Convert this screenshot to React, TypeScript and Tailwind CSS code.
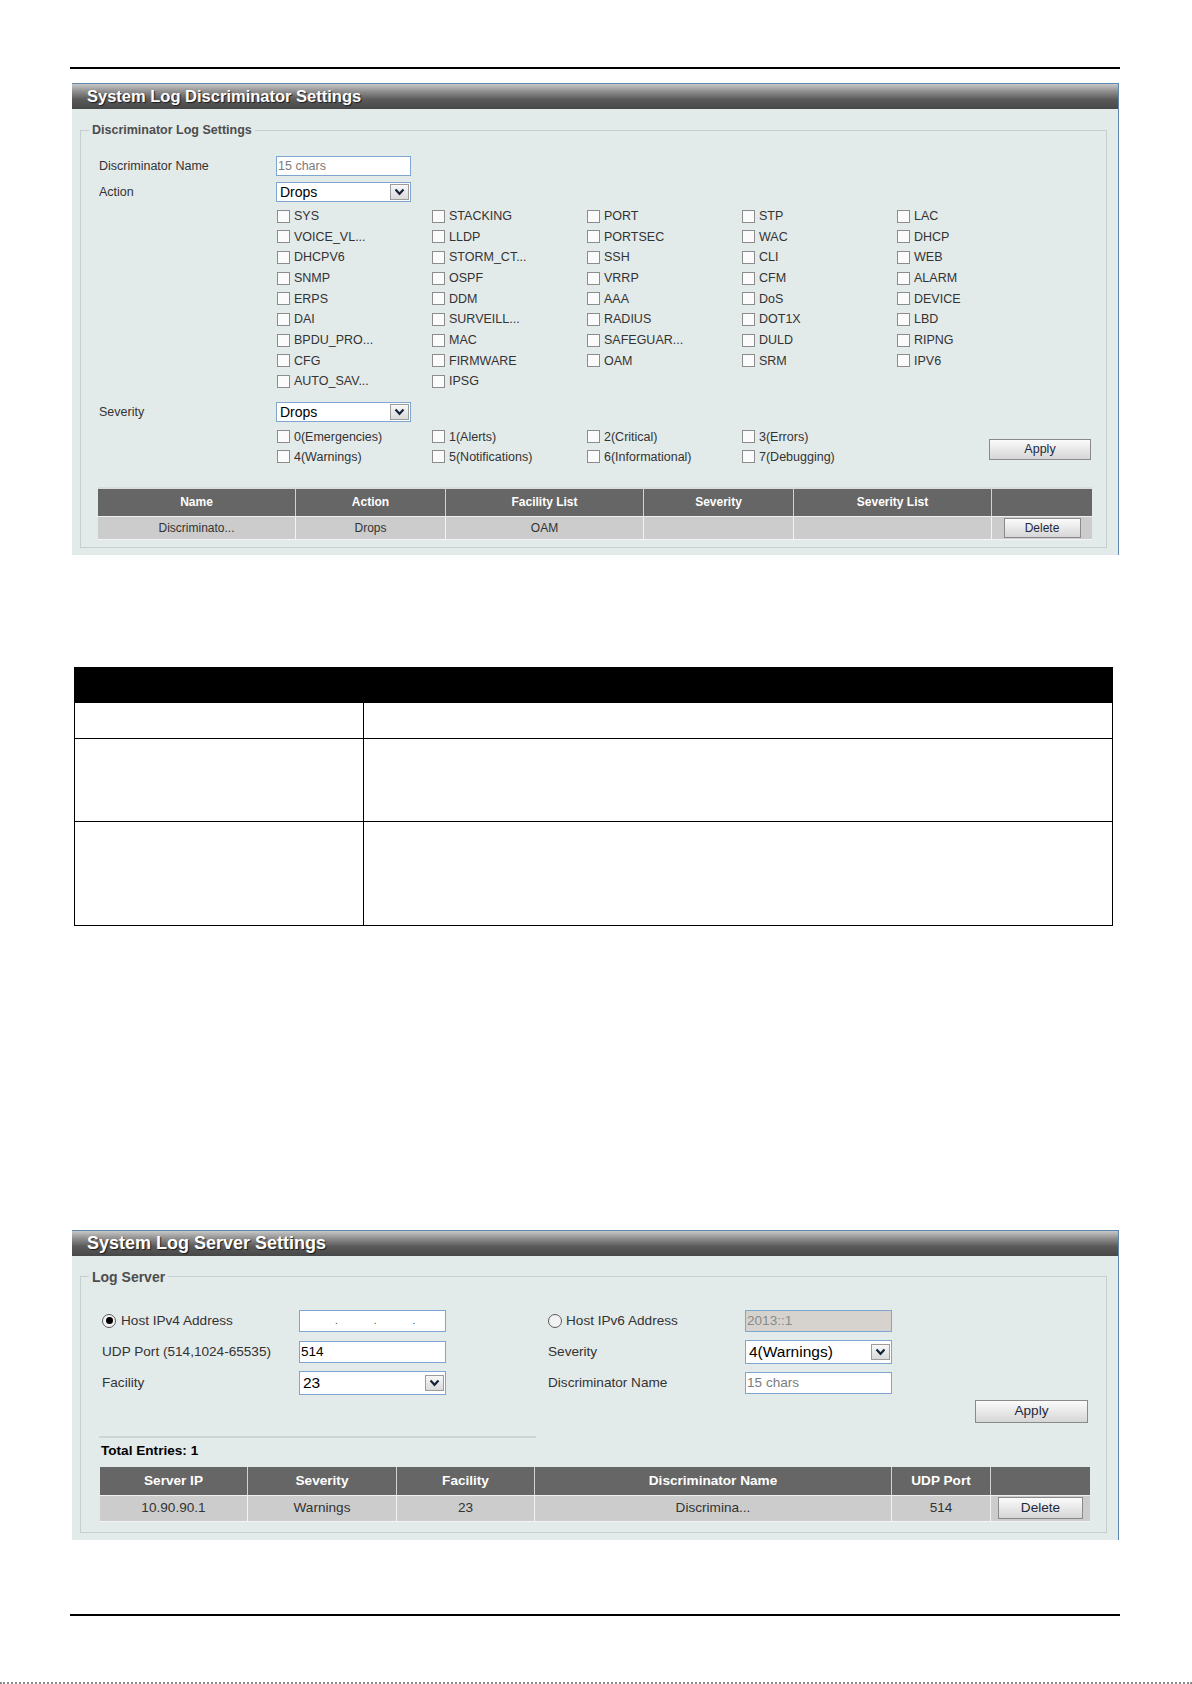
import type { ReactNode } from 'react';

const FACILITIES = [
  'SYS', 'STACKING', 'PORT', 'STP', 'LAC',
  'VOICE_VL...', 'LLDP', 'PORTSEC', 'WAC', 'DHCP',
  'DHCPV6', 'STORM_CT...', 'SSH', 'CLI', 'WEB',
  'SNMP', 'OSPF', 'VRRP', 'CFM', 'ALARM',
  'ERPS', 'DDM', 'AAA', 'DoS', 'DEVICE',
  'DAI', 'SURVEILL...', 'RADIUS', 'DOT1X', 'LBD',
  'BPDU_PRO...', 'MAC', 'SAFEGUAR...', 'DULD', 'RIPNG',
  'CFG', 'FIRMWARE', 'OAM', 'SRM', 'IPV6',
  'AUTO_SAV...', 'IPSG',
];

const SEVERITIES = [
  '0(Emergencies)', '1(Alerts)', '2(Critical)', '3(Errors)',
  '4(Warnings)', '5(Notifications)', '6(Informational)', '7(Debugging)',
];

const DISC_COLS = 'grid grid-cols-[198px_150px_198px_150px_198px_100px]';
const SERVER_COLS = 'grid grid-cols-[148px_149px_138px_357px_99px_99px]';

function Check({ label }: { label: string }) {
  return (
    <label className="flex items-center gap-[4px] text-[12.5px] text-[#333] whitespace-nowrap">
      <span className="ml-[1px] w-[13px] h-[13px] border border-[#8c8c8c] bg-[#fbfbfb] shrink-0" />
      {label}
    </label>
  );
}

function Radio({ on }: { on?: boolean }) {
  return (
    <span className="w-[14px] h-[14px] rounded-full border border-[#5a5a5a] bg-[#f2f2f2] flex items-center justify-center shrink-0">
      {on && <span className="w-[7px] h-[7px] rounded-full bg-black" />}
    </span>
  );
}

function Chevron() {
  return (
    <svg width="11" height="8" viewBox="0 0 11 8">
      <path d="M1.5 1.5 5.5 5.8 9.5 1.5" fill="none" stroke="#17263c" strokeWidth="2.2" />
    </svg>
  );
}

function Select({ value, className }: { value: string; className: string }) {
  return (
    <div className={`${className} border border-[#7fa6d2] bg-white flex items-center justify-between pl-[3px] pr-[1px]`}>
      <span className="text-black leading-none">{value}</span>
      <span className="w-[19px] h-[16px] border border-[#9c9c9c] bg-linear-to-b from-[#f8f8f8] to-[#dadada] flex items-center justify-center">
        <Chevron />
      </span>
    </div>
  );
}

function TextBox({ className, placeholder, value }: { className: string; placeholder?: string; value?: string }) {
  return (
    <input
      readOnly
      placeholder={placeholder}
      value={value ?? ''}
      className={`${className} border border-[#7fa6d2] bg-white px-[1px] text-black placeholder:text-[#7c7c7c] outline-none`}
    />
  );
}

function Button({ label, className }: { label: string; className: string }) {
  return (
    <button className={`${className} border border-[#8a8a8a] bg-linear-to-b from-[#fbfbfb] to-[#d6d6d6] text-[#1e2a40] flex items-center justify-center`}>
      {label}
    </button>
  );
}

function Panel({ title, legend, children, className, titleSize, legendSize }: {
  title: string;
  legend: string;
  children: ReactNode;
  className: string;
  titleSize: string;
  legendSize: string;
}) {
  return (
    <section className={`${className} ml-[72px] w-[1047px] bg-[#e3eaea] border-t border-r border-[#5d87ad] shrink-0`}>
      <div className="h-[25px] bg-[linear-gradient(#c8c8c8,#8e8e8e_30%,#5a5a5a_62%,#474747)] pl-[15px] flex items-center">
        <h2 className={`${titleSize} text-white font-bold leading-none [text-shadow:1px_1px_1px_#1c1c1c]`}>{title}</h2>
      </div>
      <div className="pl-[8px] pr-[11px] pt-[14px] pb-[7px]">
        <fieldset className="border border-[#c4cfcf]">
          <legend className={`${legendSize} ml-[8px] px-[3px] leading-[14px] font-bold text-[#4d4d4d]`}>{legend}</legend>
          {children}
        </fieldset>
      </div>
    </section>
  );
}

function DiscriminatorPanel() {
  return (
    <Panel
      className="mt-[14px]"
      titleSize="text-[16.5px]"
      legendSize="text-[12.5px]"
      title="System Log Discriminator Settings"
      legend="Discriminator Log Settings"
    >
      <div className="pl-[18px] pr-[13px] pt-[19px] pb-[7px] text-[12.5px] text-[#333]">
        <div className="flex items-center h-[20px]">
          <span className="w-[177px]">Discriminator Name</span>
          <TextBox className="w-[135px] h-[20px] text-[12.5px]" placeholder="15 chars" />
        </div>
        <div className="flex items-center h-[20px] mt-[6px]">
          <span className="w-[177px]">Action</span>
          <Select className="w-[135px] h-[20px] text-[14px]" value="Drops" />
        </div>
        <div className="flex mt-[4px]">
          <div className="w-[177px] shrink-0" />
          <div className="grid grid-cols-[155px_155px_155px_155px_155px] auto-rows-[20.67px] items-center">
            {FACILITIES.map((f) => (
              <Check key={f} label={f} />
            ))}
          </div>
        </div>
        <div className="flex items-center h-[20px] mt-[10px]">
          <span className="w-[177px]">Severity</span>
          <Select className="w-[135px] h-[20px] text-[14px]" value="Drops" />
        </div>
        <div className="flex items-end mt-[5px]">
          <div className="w-[177px] shrink-0" />
          <div className="grid grid-cols-[155px_155px_155px_155px] auto-rows-[20px] items-center">
            {SEVERITIES.map((s) => (
              <Check key={s} label={s} />
            ))}
          </div>
          <div className="flex-1 flex justify-end pb-[7px]">
            <Button label="Apply" className="w-[102px] h-[21px] mr-[2px] text-[12.5px]" />
          </div>
        </div>

        <div className="mt-[20px] w-[994px] -ml-[1px] border-t-2 border-[#d7dddd]">
          <div className={`${DISC_COLS} h-[27px] bg-[#666666] text-white font-bold text-[12px]`}>
            {['Name', 'Action', 'Facility List', 'Severity', 'Severity List', ''].map((h, i) => (
              <div key={i} className="flex items-center justify-center border-r border-[#d2d2d2] last:border-r-0">{h}</div>
            ))}
          </div>
          <div className={`${DISC_COLS} h-[24px] bg-[#cccccc] text-[#333] text-[12px] border-t border-[#efefef] border-b border-b-[#f4f4f4]`}>
            {['Discriminato...', 'Drops', 'OAM', '', ''].map((c, i) => (
              <div key={i} className="flex items-center justify-center border-r border-[#f4f4f4]">{c}</div>
            ))}
            <div className="flex items-center justify-center">
              <Button label="Delete" className="w-[77px] h-[20px] text-[12px]" />
            </div>
          </div>
        </div>
      </div>
    </Panel>
  );
}

function IpBox() {
  return (
    <div className="w-[147px] h-[22px] border border-[#7fa6d2] bg-white flex items-end pb-[5px] pl-[35px] gap-[36px] text-[10px] leading-none text-[#444]">
      <span>.</span>
      <span>.</span>
      <span>.</span>
    </div>
  );
}

function ServerPanel() {
  return (
    <Panel
      className="mt-[304px]"
      titleSize="text-[18px]"
      legendSize="text-[14px]"
      title="System Log Server Settings"
      legend="Log Server"
    >
      <div className="pl-[21px] pr-[16px] pt-[26px] pb-[10px] text-[13.6px] text-[#333]">
        <div className="grid grid-cols-[197px_147px_102px_197px_147px] auto-rows-[22px] gap-y-[9px] items-center">
          <span className="flex items-center gap-[5px]"><Radio on />Host IPv4 Address</span>
          <IpBox />
          <span />
          <span className="flex items-center gap-[4px]"><Radio />Host IPv6 Address</span>
          <input
            readOnly
            value="2013::1"
            className="w-[147px] h-[22px] border border-[#7fa6d2] bg-[#d6d3ce] px-[1px] text-[13.6px] text-[#8a8a8a] outline-none"
          />

          <span>UDP Port (514,1024-65535)</span>
          <TextBox className="w-[147px] h-[22px] text-[13.6px]" value="514" />
          <span />
          <span>Severity</span>
          <Select className="w-[147px] h-[24px] text-[15.5px]" value="4(Warnings)" />

          <span>Facility</span>
          <Select className="w-[147px] h-[24px] text-[15.5px]" value="23" />
          <span />
          <span>Discriminator Name</span>
          <TextBox className="w-[147px] h-[22px] text-[13.6px]" placeholder="15 chars" />
        </div>

        <div className="flex justify-end mt-[6px]">
          <Button label="Apply" className="w-[113px] h-[23px] mr-[2px] text-[13.6px]" />
        </div>

        <div className="mt-[13px] -ml-[3px] w-[437px] h-[2px] bg-[#cdd6d6]" />
        <p className="mt-[6px] -ml-[1px] font-bold text-black leading-[14px]">Total Entries: 1</p>

        <div className="mt-[9px] -ml-[2px] w-[990px]">
          <div className={`${SERVER_COLS} h-[28px] bg-[#666666] text-white font-bold`}>
            {['Server IP', 'Severity', 'Facility', 'Discriminator Name', 'UDP Port', ''].map((h, i) => (
              <div key={i} className="flex items-center justify-center border-r border-[#d2d2d2] last:border-r-0">{h}</div>
            ))}
          </div>
          <div className={`${SERVER_COLS} h-[27px] bg-[#cccccc] text-[#333] border-t border-[#efefef] border-b border-b-[#f4f4f4]`}>
            {['10.90.90.1', 'Warnings', '23', 'Discrimina...', '514'].map((c, i) => (
              <div key={i} className="flex items-center justify-center border-r border-[#f4f4f4]">{c}</div>
            ))}
            <div className="flex items-center justify-center">
              <Button label="Delete" className="w-[85px] h-[22px] text-[13.6px]" />
            </div>
          </div>
        </div>
      </div>
    </Panel>
  );
}

function ParamTable() {
  return (
    <table className="mt-[112px] ml-[74px] w-[1039px] border-collapse border border-black shrink-0">
      <thead>
        <tr className="h-[35px] bg-black">
          <th className="w-[289px]" />
          <th />
        </tr>
      </thead>
      <tbody>
        <tr className="h-[36px]">
          <td className="border border-black" />
          <td className="border border-black" />
        </tr>
        <tr className="h-[83px]">
          <td className="border border-black" />
          <td className="border border-black" />
        </tr>
        <tr className="h-[104px]">
          <td className="border border-black" />
          <td className="border border-black" />
        </tr>
      </tbody>
    </table>
  );
}

export default function App() {
  return (
    <div className="w-[1192px] h-[1684px] bg-white flex flex-col font-['Liberation_Sans',Arial,sans-serif] overflow-hidden">
      <div className="mt-[67px] ml-[70px] w-[1050px] h-[2px] bg-black shrink-0" />
      <DiscriminatorPanel />
      <ParamTable />
      <ServerPanel />
      <div className="mt-[74px] ml-[70px] w-[1050px] h-[2px] bg-black shrink-0" />
      <div className="mt-auto h-[2px] w-full border-t-2 border-dotted border-[#8a8a8a]" />
    </div>
  );
}
